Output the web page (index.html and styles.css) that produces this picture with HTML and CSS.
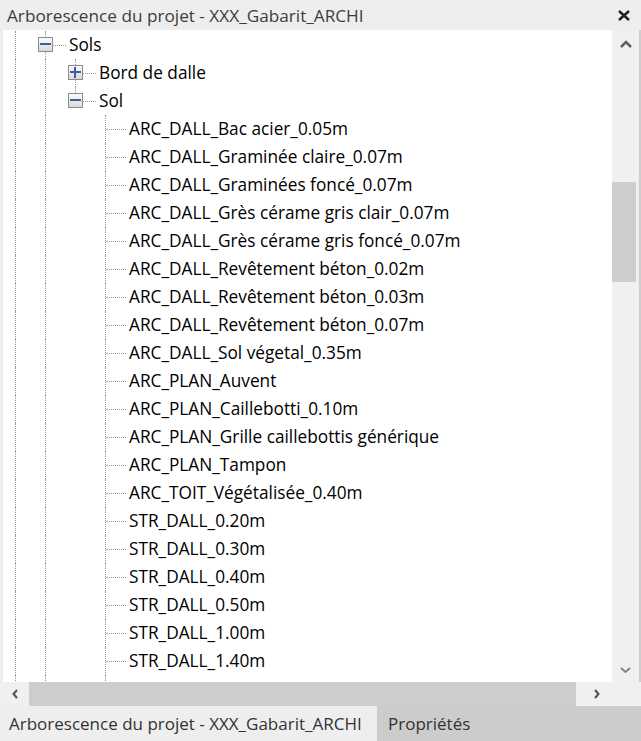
FILE: index.html
```html
<!DOCTYPE html>
<html lang="fr">
<head>
<meta charset="utf-8">
<title>Arborescence du projet</title>
<link rel="stylesheet" href="styles.css">
</head>
<body>
<div class="panel">
  <div class="titlebar">
    <span class="title">Arborescence du projet - XXX_Gabarit_ARCHI</span>
    <svg class="close" width="14" height="11" viewBox="0 0 14 11"><path d="M2 1 L12 10 M12 1 L2 10" stroke="#1e1e1e" stroke-width="2.4" fill="none"/></svg>
  </div>
  <div class="main">
    <div class="tree">
      <div class="row"><span class="g"></span><span class="n"><span class="box minus"></span></span><span class="t">Sols</span></div>
      <div class="row"><span class="g"></span><span class="g"></span><span class="n"><span class="box plus"></span></span><span class="t">Bord de dalle</span></div>
      <div class="row"><span class="g"></span><span class="g"></span><span class="n last"><span class="box minus"></span></span><span class="t">Sol</span></div>
      <div class="row"><span class="g"></span><span class="g"></span><span class="e"></span><span class="n"></span><span class="t">ARC_DALL_Bac acier_0.05m</span></div>
      <div class="row"><span class="g"></span><span class="g"></span><span class="e"></span><span class="n"></span><span class="t">ARC_DALL_Graminée claire_0.07m</span></div>
      <div class="row"><span class="g"></span><span class="g"></span><span class="e"></span><span class="n"></span><span class="t">ARC_DALL_Graminées foncé_0.07m</span></div>
      <div class="row"><span class="g"></span><span class="g"></span><span class="e"></span><span class="n"></span><span class="t">ARC_DALL_Grès cérame gris clair_0.07m</span></div>
      <div class="row"><span class="g"></span><span class="g"></span><span class="e"></span><span class="n"></span><span class="t">ARC_DALL_Grès cérame gris foncé_0.07m</span></div>
      <div class="row"><span class="g"></span><span class="g"></span><span class="e"></span><span class="n"></span><span class="t">ARC_DALL_Revêtement béton_0.02m</span></div>
      <div class="row"><span class="g"></span><span class="g"></span><span class="e"></span><span class="n"></span><span class="t">ARC_DALL_Revêtement béton_0.03m</span></div>
      <div class="row"><span class="g"></span><span class="g"></span><span class="e"></span><span class="n"></span><span class="t">ARC_DALL_Revêtement béton_0.07m</span></div>
      <div class="row"><span class="g"></span><span class="g"></span><span class="e"></span><span class="n"></span><span class="t">ARC_DALL_Sol végetal_0.35m</span></div>
      <div class="row"><span class="g"></span><span class="g"></span><span class="e"></span><span class="n"></span><span class="t">ARC_PLAN_Auvent</span></div>
      <div class="row"><span class="g"></span><span class="g"></span><span class="e"></span><span class="n"></span><span class="t">ARC_PLAN_Caillebotti_0.10m</span></div>
      <div class="row"><span class="g"></span><span class="g"></span><span class="e"></span><span class="n"></span><span class="t">ARC_PLAN_Grille caillebottis générique</span></div>
      <div class="row"><span class="g"></span><span class="g"></span><span class="e"></span><span class="n"></span><span class="t">ARC_PLAN_Tampon</span></div>
      <div class="row"><span class="g"></span><span class="g"></span><span class="e"></span><span class="n"></span><span class="t">ARC_TOIT_Végétalisée_0.40m</span></div>
      <div class="row"><span class="g"></span><span class="g"></span><span class="e"></span><span class="n"></span><span class="t">STR_DALL_0.20m</span></div>
      <div class="row"><span class="g"></span><span class="g"></span><span class="e"></span><span class="n"></span><span class="t">STR_DALL_0.30m</span></div>
      <div class="row"><span class="g"></span><span class="g"></span><span class="e"></span><span class="n"></span><span class="t">STR_DALL_0.40m</span></div>
      <div class="row"><span class="g"></span><span class="g"></span><span class="e"></span><span class="n"></span><span class="t">STR_DALL_0.50m</span></div>
      <div class="row"><span class="g"></span><span class="g"></span><span class="e"></span><span class="n"></span><span class="t">STR_DALL_1.00m</span></div>
      <div class="row"><span class="g"></span><span class="g"></span><span class="e"></span><span class="n"></span><span class="t">STR_DALL_1.40m</span></div>
      <div class="row"><span class="g"></span><span class="g"></span><span class="e"></span><span class="g"></span></div>
    </div>
    <div class="vscroll">
      <div class="sbtn"><svg width="12" height="8" viewBox="0 0 12 8"><path d="M1 7 L6 2 L11 7" stroke="#606060" stroke-width="2.5" fill="none"/></svg></div>
      <div class="track"><div class="thumb"></div></div>
      <div class="sbtn down"><svg width="11" height="6" viewBox="0 0 11 6"><path d="M1 1 L5.5 5 L10 1" stroke="#7d8088" stroke-width="1.8" fill="none"/></svg></div>
    </div>
  </div>
  <div class="hscroll">
    <div class="hleft"><svg width="6" height="10" viewBox="0 0 6 10"><path d="M5 1 L1.5 5 L5 9" stroke="#505050" stroke-width="2" fill="none"/></svg></div>
    <div class="hthumb"></div>
    <div class="hright"><svg width="6" height="10" viewBox="0 0 6 10"><path d="M1 1 L4.5 5 L1 9" stroke="#505050" stroke-width="2" fill="none"/></svg></div>
  </div>
  <div class="tabs">
    <div class="tab active">Arborescence du projet - XXX_Gabarit_ARCHI</div>
    <div class="tab other">Propriétés</div>
  </div>
</div>
</body>
</html>
```
FILE: styles.css
```css
* { box-sizing: border-box; margin: 0; padding: 0; }
html, body { width: 641px; height: 741px; overflow: hidden; }
body {
  background: #eeeeee;
  font-family: "Open Sans", "Noto Sans", sans-serif;
  font-size: 17px;
  color: #000;
}
.panel { display: flex; flex-direction: column; height: 741px; }

.titlebar {
  height: 30px;
  flex: none;
  display: flex;
  align-items: center;
  justify-content: space-between;
  padding-left: 7px;
  padding-right: 10px;
  color: #3d3d3d;
  font-size: 17.2px;
}
.close { display: block; margin-top: 1px; }

.main { display: flex; height: 652px; flex: none; }
.tree {
  flex: 1;
  background: #fff;
  margin-left: 3px;
  overflow: hidden;
  padding-top: 1px;
  font-size: 17.25px;
}
.row { display: flex; height: 28px; flex: none; }
.g, .e { width: 30px; flex: none; position: relative; }
.g::before, .n::before {
  content: "";
  position: absolute;
  left: 12px;
  top: 0;
  bottom: 0;
  border-left: 1px dotted #9a9a9a;
}
.n { width: 36px; flex: none; position: relative; }
.n.last::before { bottom: 50%; }
.n::after {
  content: "";
  position: absolute;
  left: 13px;
  width: 20px;
  top: 14px;
  border-top: 1px dotted #9a9a9a;
}
.box {
  position: absolute;
  left: 5px;
  top: 6px;
  width: 15px;
  height: 15px;
  border: 1px solid #8c8c8c;
  background: linear-gradient(#fbfbfb, #d9d9d9);
  z-index: 1;
}
.box::before {
  content: "";
  position: absolute;
  left: 1px;
  top: 5px;
  width: 11px;
  height: 2px;
  background: #3f5d9e;
}
.box.plus::after {
  content: "";
  position: absolute;
  left: 5px;
  top: 1px;
  width: 2px;
  height: 11px;
  background: #3f5d9e;
}
.t { line-height: 28px; white-space: nowrap; }

.vscroll {
  width: 29px;
  flex: none;
  background: #f0f0f0;
  border-right: 2px solid #cdcdcd;
  display: flex;
  flex-direction: column;
}
.sbtn {
  height: 28px;
  flex: none;
  display: flex;
  align-items: center;
  justify-content: center;
}
.sbtn svg { display: block; }
.sbtn.down { padding-top: 4px; }
.track { flex: 1; }
.thumb { margin-top: 124px; width: 24px; height: 100px; background: #cdcdcd; }

.hscroll { height: 24px; flex: none; display: flex; background: #f0f0f0; }
.hleft {
  width: 29px;
  flex: none;
  display: flex;
  align-items: center;
  justify-content: center;
  padding-left: 1px;
}
.hthumb { width: 547px; flex: none; background: #cdcdcd; }
.hright {
  flex: 1;
  display: flex;
  align-items: center;
  padding-left: 18px;
}
.hleft svg, .hright svg { display: block; }

.tabs { height: 35px; flex: none; display: flex; color: #333; }
.tab { display: flex; align-items: center; white-space: nowrap; }
.tab.active { width: 377px; flex: none; background: #eeeeee; padding-left: 9px; }
.tab.other { flex: 1; background: #cccccc; padding-left: 11px; }
```
